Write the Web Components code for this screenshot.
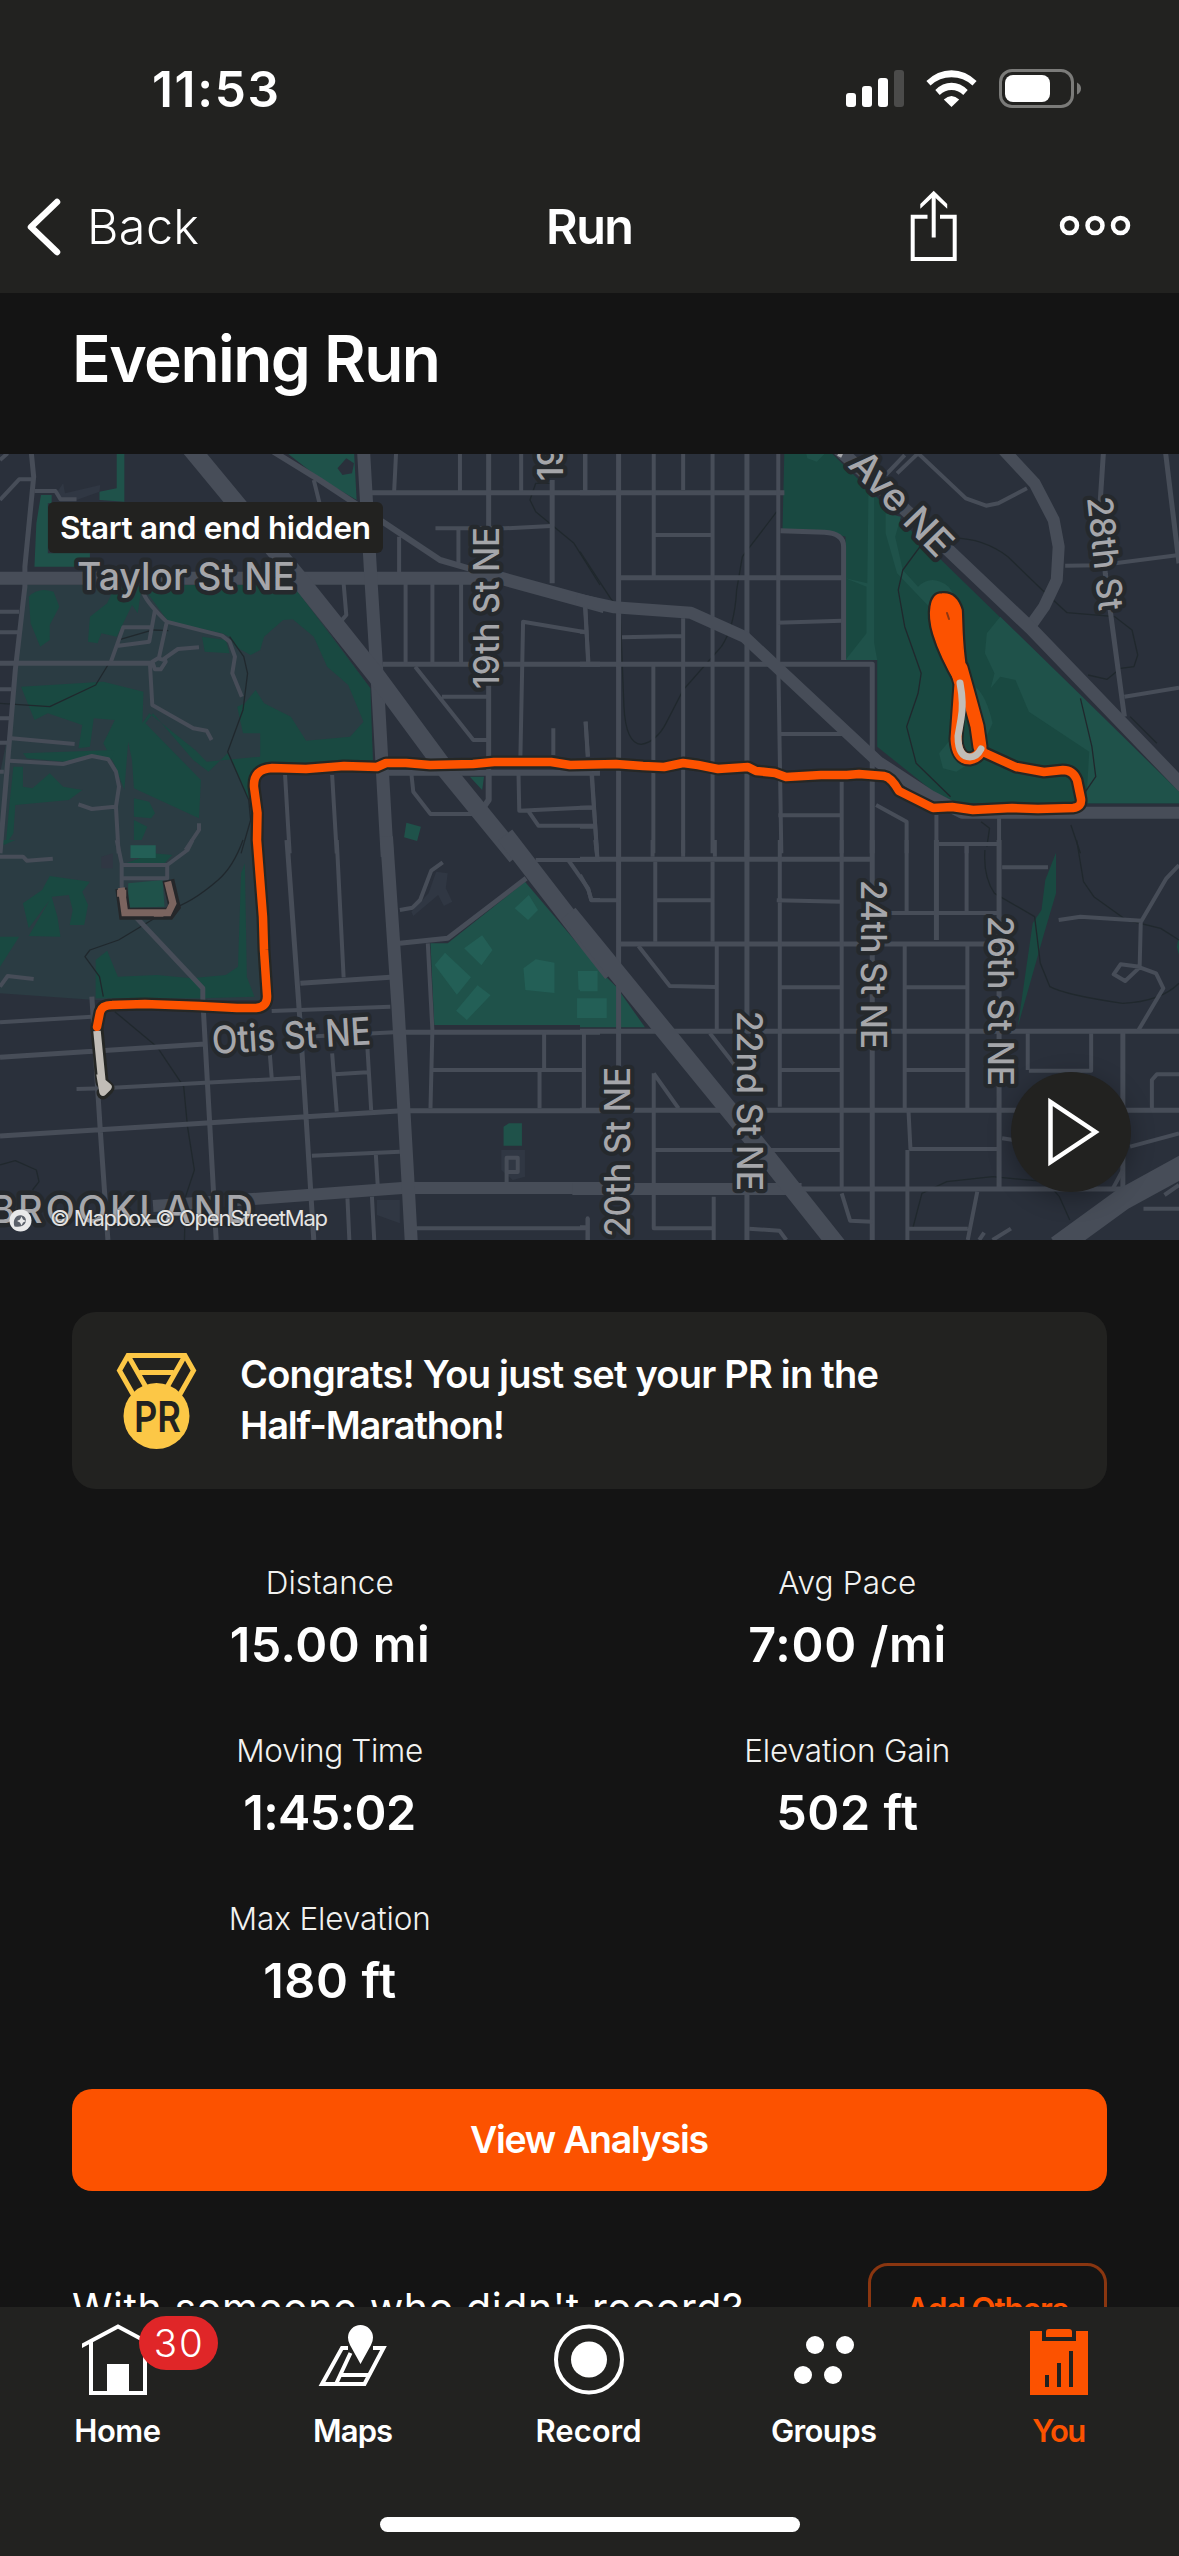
<!DOCTYPE html>
<html lang="en">
<head>
<meta charset="utf-8">
<title>Run</title>
<style>
html,body{margin:0;background:#141414}
body{width:1179px;height:2556px;overflow:hidden;font-family:Inter,"Liberation Sans",sans-serif;color:#fff}
</style>
</head>
<body>
<activity-screen></activity-screen>
<script>
const define = (name, html, after) => customElements.define(name, class extends HTMLElement {
  connectedCallback() {
    if (this.shadowRoot) return;
    const t = document.createElement('template');
    t.innerHTML = html;
    this.attachShadow({mode: 'open'}).append(t.content.cloneNode(true));
    if (after) after.call(this, this.shadowRoot);
  }
});

/* A single line of text tracked so that it fills the width given by "w". */
define('fit-text', `<style>
:host{display:inline-block;white-space:nowrap;font-size:inherit}
span{display:inline-block;white-space:pre}
</style><span><slot></slot></span>`, function (root) {
  const w = +this.getAttribute('w'), s = root.querySelector('span');
  const n = this.textContent.length;
  const ls = (w - s.getBoundingClientRect().width) / (n - 1);
  s.style.letterSpacing = ls + 'px';
  s.style.marginRight = -ls + 'px';
});

define('status-bar', `<style>
:host{display:flex;height:176px;align-items:center;justify-content:space-between;padding:1px 97px 0 152px;box-sizing:border-box;font-size:49.500px;font-weight:600;line-height:60px}
svg{display:block}
</style><fit-text w="127">11:53</fit-text>
<svg width="236" height="40" viewBox="0 0 236 40" fill="#fff">
<rect y="24" width="10" height="14" rx="3"/><rect x="16" y="17" width="10" height="21" rx="3"/><rect x="32" y="9" width="10" height="29" rx="3"/><rect x="48" y="1" width="10" height="37" rx="3" fill="#4b4b4a"/>
<path d="M80.400 12 Q91.500 1.200 105.500 1.200 Q119.500 1.200 130.600 12 L126.500 16.500 Q117.500 8.300 105.500 8.300 Q93.500 8.300 84.500 16.500Z"/>
<path d="M89.300 21 Q96.500 13.800 105.500 13.800 Q114.500 13.800 121.700 21 L117.300 26 Q112 21 105.500 21 Q99 21 93.700 26Z"/>
<path d="M97.800 30.500 Q105.500 23.500 113.200 30.500 L105.500 38Z"/>
<rect x="154.500" y="1.500" width="72" height="36" rx="11.500" fill="none" stroke="#7b7b79" stroke-width="3"/><rect x="159" y="6" width="45" height="27" rx="8"/><path d="M231 13.500Q235 15.500 235 19.500Q235 23.500 231 25.500Z" fill="#7b7b79"/>
</svg>`);

define('nav-bar', `<style>
:host{display:grid;grid-template-columns:1fr auto 1fr;height:102px;padding:0 48px 15px 25px;align-items:center;font-size:48.500px;line-height:60px}
.back{display:flex;align-items:center;gap:25px;font-weight:350}
.t{font-weight:600;position:relative;left:12px}
.r{display:flex;justify-content:flex-end;align-items:center;gap:101px}
.r svg{margin-top:-2px}
svg{display:block}
</style>
<div class="back"><svg width="37" height="60" viewBox="0 0 37 60"><path d="M32 5 L6 30 L32 55" fill="none" stroke="#fff" stroke-width="6.500" stroke-linecap="round" stroke-linejoin="round"/></svg><fit-text w="112">Back</fit-text></div>
<fit-text class="t" w="88">Run</fit-text>
<div class="r"><svg width="48" height="72" viewBox="0 0 48 72" fill="none" stroke="#fff" stroke-width="4"><path d="M17.500 26.700H2.700V69H44.700V26.700H30M23.700 4V47.500"/><path d="M10.300 18.700V14L23.700 .8L37.200 14V18.700L23.700 6.200Z" fill="#fff" stroke="none"/></svg>
<svg width="72" height="22" viewBox="0 0 72 22" fill="none" stroke="#fff" stroke-width="4.500"><circle cx="10.500" cy="10.500" r="7.500"/><circle cx="36" cy="10.500" r="7.500"/><circle cx="61.500" cy="10.500" r="7.500"/></svg></div>`);

define('route-map', `<style>
:host{display:block;position:relative;height:786px;overflow:hidden;background:#2a303b}
svg{display:block}
.m *{vector-effect:non-scaling-stroke}
.r{fill:none;stroke:#474d58;stroke-linejoin:round}
.c{fill:none;stroke:#20282d;stroke-width:1.300;stroke-linejoin:round}
.g{fill:#194941}.p{fill:#1f524a}.l{fill:#235f56}.t{fill:#2b3c43}
text{font-family:Inter,"Liberation Sans",sans-serif;font-weight:450;fill:#a5a6aa;stroke:#25292d;stroke-width:9px;paint-order:stroke;stroke-linejoin:round}
.chip{position:absolute;left:48px;top:48px;padding:0 12px;width:311px;background:#222220;border-radius:6px;font-size:31.500px;font-weight:600;line-height:51px}
.play{position:absolute;right:48px;bottom:48px;width:120px;height:120px;border-radius:50%;background:#222220;box-shadow:0 6px 24px rgba(0,0,0,.3)}
.attr{position:absolute;left:50px;bottom:7px;font-size:22px;line-height:30px;color:#e4e4e4;text-shadow:0 0 2px #333}
.logo{position:absolute;left:9px;bottom:8px}
</style>
<svg class="m" width="1179" height="786" viewBox="0 0 1179 786">
<g transform="matrix(.38265 0 0 .33333 0 -14)">
<path class="t" d="M65,435H770L965,740L975,960V985H690Q660,985 658,1030L672,1240H0V1000L30,830Z"/>
<path class="g" d="M370,435H765L968,745L975,985H690Q660,985 655,1020L650,1080L595,940L545,995L505,960L400,820L380,850L525,1020L520,1135L350,1045L345,960L335,905L325,1050L300,975L270,910L300,840L245,835L235,920L205,925L215,855L125,820L90,840L55,740L270,725L375,755L372,850L390,820L510,930L540,965L680,950V880H635L620,800L640,790L668,750L690,790L760,830L800,902L915,890L950,845L910,735L855,680L820,590L765,538L740,540L690,590L680,630L655,645L615,620L600,590L580,580L440,545Z"/>
<path class="g" d="M75,470Q100,440 140,455L155,500L130,555L130,600L105,620L80,550ZM235,530L280,490L300,440H370L360,520L345,495L305,590L265,580L255,610L230,605ZM528,590L590,600L600,640L535,635ZM60,940L300,930L290,960L235,945L170,965L70,955ZM35,980H60V1040L85,1045L130,1000L165,1040L215,1050L180,1080L40,1095L35,1180L15,1215L25,1090ZM350,1075L390,1085L405,1120L395,1135L350,1130ZM350,1140L385,1160L370,1200L350,1200Z"/>
<path class="p" d="M305,30H325V185L260,180V155L305,145ZM107,165H135V190H125V340H235V380H90L95,250ZM740,30H925L932,180L835,115ZM1228,1010H1265L1260,1050ZM1062,1148L1100,1160L1090,1203L1056,1192Z"/>
<path fill="#2a303b" d="M882,85L905,55L925,70L920,100L895,105Z"/>
<path fill="#303743" d="M150,155L165,130L170,160L262,135L260,155L200,180H155Z"/>
<path class="l" d="M340,1215H408V1260H340Z"/>
</g>
<g transform="matrix(.38202 0 0 .33333 580 -14)">
<path class="g" d="M535,30H650L1568,1055V1090H985L930,1060L778,920V660H695V290L650,275H530Z"/>
<path class="p" d="M590,30H650L620,65L595,55ZM755,160L770,170V610L778,660H695L750,580V440L695,415L752,430ZM800,220L840,230L825,290L845,390L885,440Q920,400 965,440L1000,500L990,680L930,520L830,400L800,280ZM1100,530L1315,770L1568,1055V1090H1325L1333,935L1175,815L1140,720L1100,710L1075,745L1085,700L1060,640L1065,580ZM1035,740Q1065,770 1080,850L1060,900ZM965,905L940,940L950,985L985,995L1020,970L975,940Z"/>
</g>
<g transform="matrix(.38265 0 0 .33333 0 386)">
<path class="t" d="M0,0H672L690,480H250L0,460Z"/>
<path class="g" d="M0,290L50,290L0,380ZM60,190L110,150L130,108L235,125L215,155L230,195L220,255H182L190,210L180,165L135,170L150,230L158,290L75,288L130,180L75,265ZM250,360L280,332L308,410L410,405L500,415L590,405L622,380L630,100L640,70L645,410L665,470L530,475H250ZM0,0H40L10,15ZM400,40L450,45L430,70H330Z"/>
<path class="p" d="M335,130L425,120L430,200L335,203ZM1125,310H1170L1372,125L1568,390V555H1135ZM1316,860L1330,850H1364V917H1316Z"/>
<path class="l" d="M341,16H407V54H341ZM1345,205L1382,165L1406,210L1380,240ZM1213,325L1260,286L1287,330L1258,376ZM1136,375L1163,338L1231,412L1194,464ZM1192,512L1248,436L1282,466L1220,540ZM1368,385L1400,358L1449,368V459L1373,450ZM1510,393H1568V454L1512,449ZM1508,475H1568V534H1508Z"/>
<path fill="#303743" d="M1140,95L1170,100L1165,145L1182,185L1160,198L1145,165L1080,228L1075,215L1120,160ZM265,50L295,40V85H265ZM1310,930H1372V1010L1340,1020L1310,990ZM985,1080H1045V1150L985,1125Z"/>
</g>
<g transform="matrix(.38202 0 0 .33333 580 386)">
<path class="p" d="M0,335L95,440L170,562H0Z"/><path class="l" d="M0,393H46V454H0ZM0,475H70V534H0Z"/>
<path class="g" d="M1246,38V160L1215,280L1146,560L1185,250L1208,210L1218,120ZM1568,290V345L1562,320Z"/>
</g>

<g transform="matrix(.38265 0 0 .33333 0 -14)">
<path class="c" d="M0,790L130,800L250,735L290,660M310,600L400,570L440,572M600,590L637,650L647,700L635,810L595,935L650,1080L655,1140L630,1240M1440,130H1400L1385,180L1400,215L1500,310L1568,435"/>
<path class="r" stroke-width="5" d="M82,40L88,110L65,380L65,440L40,690L0,1240M970,158H1568M1277,40V260M1277,600V1080M1443,120V430M0,670H400M1000,673H1568"/>
<path class="r" stroke-width="4" d="M0,180L50,118H82M90,153H145L158,178H200M0,60L20,40M0,515H50M0,577H50M0,748H30M0,835H25M0,908H20M0,995H10M375,460Q385,490 435,545L580,587L600,605L614,650L607,700L632,770M405,510L390,605L305,618M435,550L415,655M290,665L322,562H400M520,622L465,627L430,655L433,665L420,688H405L398,665L413,655L430,660M392,675L398,795L505,865L540,872L553,900M30,895L195,912M25,962L165,972L240,948L283,958L303,995L311,1040L303,1100L310,1240M205,1093L240,1107L300,1100M520,1150V1170L485,1230M820,120L835,190M898,430L905,525L890,545M1035,40L1030,155M1202,40V155M1362,40V155M1530,40V155M1138,265H1320L1440,258M1043,290V400M1198,265V370M1060,430V670M1130,430V670M1205,430V670M1530,500L1537,670M1530,577L1367,545L1360,950M1085,680L1237,900H1275M1155,770H1275M1446,865V945M1530,845L1537,950M745,1005L757,1240M868,1005L880,1240M1075,1000L1080,1055L1125,1122H1240M1355,1000L1357,1112L1550,1102M1547,1000L1560,1240M1380,1112L1407,1157H1560"/>
<path class="r" stroke-width="6" d="M715,35L835,120L1000,245L1150,360L1225,385M1000,998H1568M1277,998V1080L1265,1100"/>
<path class="r" stroke-width="13" d="M0,415H1310L1580,500"/>
<path class="r" stroke-width="13" d="M950,30L970,430L985,700L1012,1250"/>
<path class="r" stroke-width="18" d="M495,20L790,430L985,710L1165,990L1350,1250"/>
</g>
<g transform="matrix(.38202 0 0 .33333 580 -14)">
<path class="c" d="M0,335L80,475L105,510L115,800Q120,910 160,913Q200,905 225,850L270,750L370,620Q405,560 410,450L425,350L515,215M965,295Q1050,290 1120,350L1210,450L1275,518L1400,530L1445,570L1460,645L1450,680L1415,685L1380,718L1330,705M890,320L845,390L833,450L850,560L893,700L885,760L855,860L880,970L970,1070M1310,775L1340,920L1350,1010L1320,1060M1440,830L1510,910M1050,1145L1072,1165L1065,1220M1285,1155L1310,1240"/>
<path class="r" stroke-width="5" d="M0,158H535M101,40V1250M437,40V1250M101,413H690M0,673H765V1240M525,272L640,277Q690,280 690,320V660"/>
<path class="r" stroke-width="4" d="M13,40V150M193,40V410M270,40V150M347,40V1240M519,40V660L527,1240M193,285H347M515,548L685,542M110,592L270,588M270,535V1240M192,675V1240M0,575H15M13,500L22,665M15,845L20,950M519,882H690M30,1000L45,1240M0,1103H35M0,1160H35M685,1025V1240M519,1126H685M775,1095L855,1145V1240M933,1125V1240M1097,1135V1240M940,1212H1097M1012,1212V1240M830,100L885,40M885,40L1010,175L1063,197L1095,190L1170,145M800,105L850,45M1270,377L1360,376L1568,345M1425,770L1568,743"/>
<path class="r" stroke-width="5" d="M1370,40L1362,180L1375,400L1425,830M1532,30L1568,370"/>
<path class="r" stroke-width="12" d="M-10,477L90,502L290,518L430,590L780,965L920,1070L1000,1118H1600M1105,25L1190,130L1240,240L1253,320L1248,420L1215,500L1175,565"/>
<path class="r" stroke-width="13" d="M650,0L900,260L1180,565L1600,1065"/>
</g>
<g transform="matrix(.38265 0 0 .33333 0 386)">
<path class="c" d="M635,0Q610,80 570,120Q500,190 440,210L310,300L235,330L222,350L260,410L270,470M300,515L410,620L480,740L490,860L508,990L485,1070L482,1200M0,975L40,962L95,990L102,1025L85,1050"/>
<path class="r" stroke-width="5" d="M0,652L535,612M0,888L550,848L1050,812H1568M530,480L565,1200M240,470L262,870L282,1200M750,0L785,560L820,1200M1030,577H1568M785,430L1020,412M1045,310L1170,295L1375,115M350,225L530,445V480"/>
<path class="r" stroke-width="4" d="M305,0L318,70V150M318,75H437V115H318M437,75L490,30L503,0M0,50H60L70,62L138,56M0,440L20,408L88,417M0,547L240,530M710,513L1020,500M200,747L270,745L785,713M705,640L710,713M880,0L898,412M1045,210L1078,203L1098,180L1127,92L1157,67M1118,310L1130,570L1125,805M1422,577V687M1130,690H1525M1526,577V805M1410,690V805M868,640L880,815M960,620L970,810M875,703L960,697M815,947L1045,935M982,940L987,1035M908,1075L913,1200M972,1070L978,1200M1085,1165H1536M1536,1135V1200M1400,60H1568M1557,0L1562,60M1485,60L1537,145L1545,180H1568M1324,1028V953H1353V996H1326M800,590L1030,577"/>
<path class="r" stroke-width="12" d="M400,1098L650,1078L1060,1043L1100,1044H1600"/>
<path class="r" stroke-width="13" d="M1010,-10L1040,500L1065,1000L1075,1210"/>
<path class="r" stroke-width="18" d="M1320,-15L1545,320L1600,400"/>
<path style="fill:none;stroke:#25272a;stroke-width:12px" d="M317,145L326,221H442L456,200L440,120"/>
<path style="fill:none;stroke:#7b645f;stroke-width:7px" d="M317,143L326,218H440L452,190L438,125M306,160H330M402,220H427"/>
</g>
<g transform="matrix(.38202 0 0 .33333 580 386)">
<path class="c" d="M1060,30Q1055,110 1085,160L1190,230L1205,370L1230,440Q1270,465 1420,490Q1520,485 1568,430M1300,0L1318,125L1345,170L1430,240L1520,265L1568,300M870,1170L895,1060L960,1025L1080,1010L1220,1025L1255,1070L1282,1140"/>
<path class="r" stroke-width="5" d="M0,58H765M101,0V700M437,0V530M437,1060V1200M765,0V1200M105,312H1097M1097,0V1045M0,574H1568M0,811H1568M933,0V300M580,1047H1420M1421,580V1045"/>
<path class="r" stroke-width="4" d="M40,0L45,50M190,0V50M270,0V50M353,0V50M523,0V800M685,0V1045M855,0V215M1012,15V215M940,12H1097M810,219H1097M197,65V305M347,65V305M197,181H347M515,181L685,185M0,105L22,150L30,181H101M153,318L235,438L355,441M358,318V570M519,442H685M850,318V805M1014,318V805M850,442H1014M519,690H685M850,690H1014M340,580L405,675M193,700V1165H347M193,700L258,805M193,930H685M350,1070V1200M0,690H10V805M1105,82H1225M1253,240L1310,230L1470,242L1535,115L1568,75M1468,242L1465,380L1415,373L1397,403L1427,423L1465,382L1508,400L1527,445L1462,570M1172,580V690M1175,692H1338V580M1497,805V720L1510,703H1568M1105,895L1135,900M1440,920L1568,880M860,815L865,927H1097M857,930V1200M857,1166H1015M685,1060L707,1142L765,1145M443,1166L522,1172L540,1200M0,1162H20V1135V1200M1040,1055L1015,1200M1080,1200L1128,1166M1045,1200L1058,1178M1395,1045L1421,990M1475,1106H1568M1530,1065L1568,1035"/>
<path class="r" stroke-width="12" d="M-20,1047H580"/>
<path class="r" stroke-width="18" d="M-30,220L440,880L690,1240"/>
<path class="r" stroke-width="22" d="M1250,1220L1420,1078L1600,965"/>
</g>

<g fill="none" stroke-linecap="round" stroke-linejoin="round">
<g stroke="#252725">
<path stroke-width="13" d="M97,573L100,558Q102,551 112,551L145,550L199,552L237,554H256Q268,553 267,541L264,496L263,463L257,386L257.500,359L254,333Q253,315 272,314L306,315L344,312L377,313L386,309H406L430,311L473,310L494,308L551,308L570,311L616,310L643,312L664,313L683,309L698,311L718,315L748,313L756,317L775,319L786,323L821,321H847L859,320L884,322Q891,323 899,337L933,354L952,353L973,356L1012,354L1038,355L1073,354Q1082,353 1081,345L1077,326Q1073,316 1063,316L1044,318L1016,313L983,298"/>
<path stroke-width="13" d="M103,639L108,634L102,628L97,575"/>
<path stroke-width="15" d="M956,216L960,230L956,285Q957,305 970,305Q979,303 981,296"/>
<path stroke-width="17" d="M961,214L971,250L977,272L980,293"/>
<path fill="#252725" stroke-width="6" d="M942,140C930,140 928,160 934,180C940,200 950,218 957,230L968,228C961,198 962,170 961,156C958,146 952,139 942,140Z"/>
</g>
<g stroke="#fc5200">
<path stroke-width="8.500" d="M97,573L100,558Q102,551 112,551L145,550L199,552L237,554H256Q268,553 267,541L264,496L263,463L257,386L257.500,359L254,333Q253,315 272,314L306,315L344,312L377,313L386,309H406L430,311L473,310L494,308L551,308L570,311L616,310L643,312L664,313L683,309L698,311L718,315L748,313L756,317L775,319L786,323L821,321H847L859,320L884,322Q891,323 899,337L933,354L952,353L973,356L1012,354L1038,355L1073,354Q1082,353 1081,345L1077,326Q1073,316 1063,316L1044,318L1016,313L983,298"/>
<path stroke-width="11" d="M956,216L960,230L956,285Q957,305 970,305Q979,303 981,296"/>
<path stroke-width="13" d="M961,214L971,250L977,272L980,293"/>
<path fill="#fc5200" stroke-width="1.500" d="M942,140C930,140 928,160 934,180C940,200 950,218 957,230L968,228C961,198 962,170 961,156C958,146 952,139 942,140Z"/>
</g>
<path d="M947,159L949,165" stroke="#8f3711" stroke-width="2"/>
<path d="M960,229Q964,250 961,265L958,282Q958,303 970,303Q977,303 981,295" stroke="#c1bdb7" stroke-width="7"/>
<path d="M97,577L102,628L108,633L103,638L100,620" stroke="#c1bdb7" stroke-width="7.500" stroke-linecap="butt"/>
</g>

<g font-size="38">
<text x="77" y="136" textLength="218" lengthAdjust="spacingAndGlyphs">Taylor St NE</text>
<text transform="translate(212 587) rotate(-3.500)" y="13" textLength="159" lengthAdjust="spacingAndGlyphs">Otis St NE</text>
<text x="-10" y="769" textLength="263" lengthAdjust="spacing">BROOKLAND</text>
</g>
<g font-size="35">
<text transform="translate(499 235) rotate(-90)" textLength="162" lengthAdjust="spacingAndGlyphs">19th St NE</text>
<text transform="translate(563 27) rotate(-90)">19th St</text>
<text transform="translate(630 783) rotate(-90)" textLength="170" lengthAdjust="spacingAndGlyphs">20th St NE</text>
<text transform="translate(737 557) rotate(90)" textLength="180" lengthAdjust="spacingAndGlyphs">22nd St NE</text>
<text transform="translate(861 426) rotate(90)" textLength="169" lengthAdjust="spacingAndGlyphs">24th St NE</text>
<text transform="translate(988 462) rotate(90)" textLength="170" lengthAdjust="spacingAndGlyphs">26th St NE</text>
<text transform="translate(1087 44) rotate(84)" textLength="114" lengthAdjust="spacingAndGlyphs">28th St</text>
<text transform="translate(847 12) rotate(46)" font-size="38" textLength="130" lengthAdjust="spacingAndGlyphs">Ave NE</text>
<path d="M838 0L842 2" stroke="#a5a6aa" stroke-width="4"/>
</g>
</svg>
<svg class="logo" width="23" height="23" viewBox="0 0 23 23"><circle cx="11.500" cy="11.500" r="11" fill="#e9e9ea"/><path d="M5.500 17.500C3 10 8 5 13 6.500C18.500 8 18 15 13 17C10.500 18 8 17.800 5.500 17.500Z" fill="#5b606a"/><path d="M12.500 7.500L14 10.500L17 12L14 13.500L12.500 16.500L11 13.500L8 12L11 10.500Z" fill="#e9e9ea"/></svg>
<fit-text class="attr" w="278">© Mapbox © OpenStreetMap</fit-text>
<div class="chip"><fit-text w="311">Start and end hidden</fit-text></div>
<div class="play"><svg width="120" height="120" viewBox="0 0 120 120"><path d="M39.500 30V90L84.500 60Z" fill="none" stroke="#fff" stroke-width="4.500"/></svg></div>`);

define('pr-card', `<style>
:host{display:flex;align-items:center;gap:43px;height:177px;margin:72px 72px 0;background:#222220;border-radius:24px;padding-left:44px;box-sizing:border-box;font-size:38px;font-weight:600;line-height:51px}
svg{display:block;overflow:visible}
.t{display:flex;flex-direction:column;align-items:flex-start;margin-top:-1px}
text{font:600 43px Inter,sans-serif;fill:#222220}
</style>
<svg width="81" height="98" viewBox="0 0 81 98"><path d="M18 44L3.500 18.500L12 3.500H69L77.500 18.500L63 44M12 3.500L31 37M69 3.500L50 37M23.500 20.500H57.500" fill="none" stroke="#fcc746" stroke-width="5"/><circle cx="40.500" cy="64" r="33" fill="#fcc746"/><text x="18" y="79.500" textLength="47" lengthAdjust="spacingAndGlyphs">PR</text></svg>
<div class="t"><fit-text w="639">Congrats! You just set your PR in the</fit-text><fit-text w="265">Half-Marathon!</fit-text></div>`);

define('stat-item', `<style>
:host{display:flex;flex-direction:column;align-items:center;gap:12.500px;height:112.500px}
.l{font-size:31.500px;line-height:40px;font-weight:350;color:#f2f2f0}
.v{font-size:48.500px;line-height:60px;font-weight:600}
</style><div class="l"><slot name="label"></slot></div><div class="v"><slot></slot></div>`);

define('stat-grid', `<style>
:host{display:grid;grid-template-columns:1fr 1fr;row-gap:55.500px;margin:73.500px 73px 0 71px}
</style><slot></slot>`);

define('primary-button', `<style>
:host{display:flex;justify-content:center;align-items:center;height:102px;margin:78px 72px 0;background:#fc5200;border-radius:20px;font-size:37.500px;font-weight:600;line-height:50px}
</style><slot></slot>`);

define('add-others', `<style>
:host{display:flex;justify-content:space-between;align-items:center;height:92px;margin:72px 72px 0}
.q{font-size:41px;font-weight:400;line-height:50px;margin-top:-3px}
.b{width:239px;height:92px;box-sizing:border-box;border:3px solid #8a3610;border-radius:20px;color:#fc5200;font-weight:600;font-size:32px;display:flex;align-items:center;justify-content:center}
</style><div class="q"><fit-text w="671">With someone who didn't record?</fit-text></div><div class="b"><fit-text w="163">Add Others</fit-text></div>`);

define('tab-item', `<style>
:host{display:flex;flex:1;flex-direction:column;align-items:center;padding-top:17px;gap:15px;font-size:31px;font-weight:600;line-height:40px}
.i{position:relative;width:72px;height:72px}
::slotted(svg){display:block;width:72px;height:72px}
::slotted(b){position:absolute;left:57px;top:-8px;width:79px;height:54px;border-radius:27px;background:#e02628;text-align:center;font-size:38.500px;font-weight:350;line-height:54px}
</style><div class="i"><slot name="icon"></slot><slot name="badge"></slot></div><slot></slot>`);

define('tab-bar', `<style>
:host{display:flex;flex-direction:column;justify-content:space-between;flex:none;height:249px;background:#222220}
.row{display:flex;margin-right:2px}
.ind{width:420px;height:15px;border-radius:8px;background:#fff;align-self:center;margin-bottom:24px}
</style><div class="row">
<tab-item><svg slot="icon" viewBox="0 0 72 72"><path d="M9 17V69H63V17" fill="none" stroke="#fff" stroke-width="4"/><path d="M0 24V19.500L36 .3L72 19.500V24L36 4.800Z" fill="#fff"/><path d="M25 40H47V70H25Z" fill="#fff"/></svg><b slot="badge"><fit-text w="49">30</fit-text></b><fit-text w="87">Home</fit-text></tab-item>
<tab-item><svg slot="icon" viewBox="0 0 72 72" fill="none" stroke="#fff" stroke-width="4"><path d="M31 24H25L5 60H47.500L66.500 24H56M33.500 29L19 60M23 51H51"/><path d="M43.500 40L33 21Q31 17.500 31 13.500A12.500 12.500 0 0 1 56 13.500Q56 17.500 54 21Z" fill="#fff" stroke="none"/></svg><fit-text w="80">Maps</fit-text></tab-item>
<tab-item><svg slot="icon" viewBox="0 0 72 72"><circle cx="36" cy="35.500" r="33" fill="none" stroke="#fff" stroke-width="4"/><circle cx="36" cy="35.500" r="18" fill="#fff"/></svg><fit-text w="106">Record</fit-text></tab-item>
<tab-item><svg slot="icon" viewBox="0 0 72 72" fill="#fff"><circle cx="27" cy="21" r="9"/><circle cx="57" cy="21" r="9"/><circle cx="15" cy="51" r="9"/><circle cx="45" cy="51" r="9"/></svg><fit-text w="106">Groups</fit-text></tab-item>
<tab-item style="color:#fc5200"><svg slot="icon" viewBox="0 0 72 72"><path fill="#fc5200" d="M7 7H19V17H53V7H65V71H7ZM22 51V63H26V51ZM34 39V63H38V39ZM46 27V63H50V27Z" fill-rule="evenodd"/><path fill="#fc5200" d="M23 13V8Q23 5 26 5H46Q49 5 49 8V13Z"/></svg><fit-text w="54">You</fit-text></tab-item>
</div><div class="ind"></div>`);

define('activity-screen', `<style>
:host{display:flex;flex-direction:column;width:1179px;height:2556px;background:#141414}
header{background:#222220;flex:none;height:293px}
main{flex:1;overflow:hidden;min-height:0}
h1{margin:0;height:135px;padding:26px 0 0 72px;font-size:64px;line-height:80px;font-weight:600}
</style>
<header><status-bar></status-bar><nav-bar></nav-bar></header>
<main>
<h1><fit-text w="369">Evening Run</fit-text></h1>
<route-map></route-map>
<pr-card></pr-card>
<stat-grid>
<stat-item><fit-text slot="label" w="128">Distance</fit-text><fit-text w="200">15.00 mi</fit-text></stat-item>
<stat-item><fit-text slot="label" w="138">Avg Pace</fit-text><fit-text w="198">7:00 /mi</fit-text></stat-item>
<stat-item><fit-text slot="label" w="187">Moving Time</fit-text><fit-text w="173">1:45:02</fit-text></stat-item>
<stat-item><fit-text slot="label" w="206">Elevation Gain</fit-text><fit-text w="142">502 ft</fit-text></stat-item>
<stat-item><fit-text slot="label" w="202">Max Elevation</fit-text><fit-text w="133">180 ft</fit-text></stat-item>
</stat-grid>
<primary-button><fit-text w="239">View Analysis</fit-text></primary-button>
<add-others></add-others>
</main>
<tab-bar></tab-bar>`);
</script>
</body>
</html>
